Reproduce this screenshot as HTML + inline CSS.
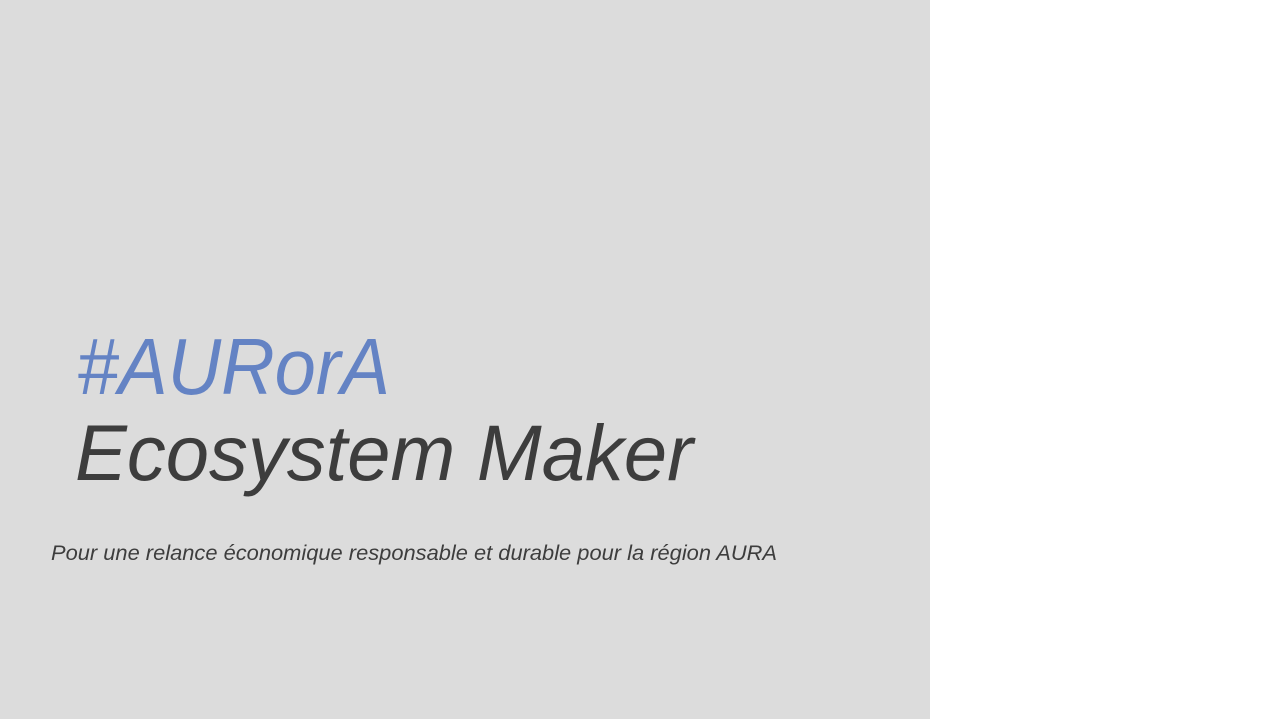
<!DOCTYPE html>
<html><head><meta charset="utf-8"><style>
html,body{margin:0;padding:0;width:1279px;height:719px;overflow:hidden;background:#fff}
</style></head><body>
<svg width="1279" height="719" xmlns="http://www.w3.org/2000/svg" style="display:block">
<rect x="0" y="0" width="930" height="719" fill="#dcdcdc"/>
<text x="77" y="394" font-family="Liberation Sans, sans-serif" font-style="italic" font-size="80" fill="#6483c4" textLength="313" lengthAdjust="spacingAndGlyphs">#AURorA</text>
<text x="75" y="480" font-family="Liberation Sans, sans-serif" font-style="italic" font-size="79" fill="#3d3d3d" textLength="618" lengthAdjust="spacingAndGlyphs">Ecosystem Maker</text>
<text x="51" y="560" font-family="Liberation Sans, sans-serif" font-style="italic" font-size="21" fill="#3d3d3d" textLength="726" lengthAdjust="spacingAndGlyphs">Pour une relance économique responsable et durable pour la région AURA</text>
</svg>
</body></html>
